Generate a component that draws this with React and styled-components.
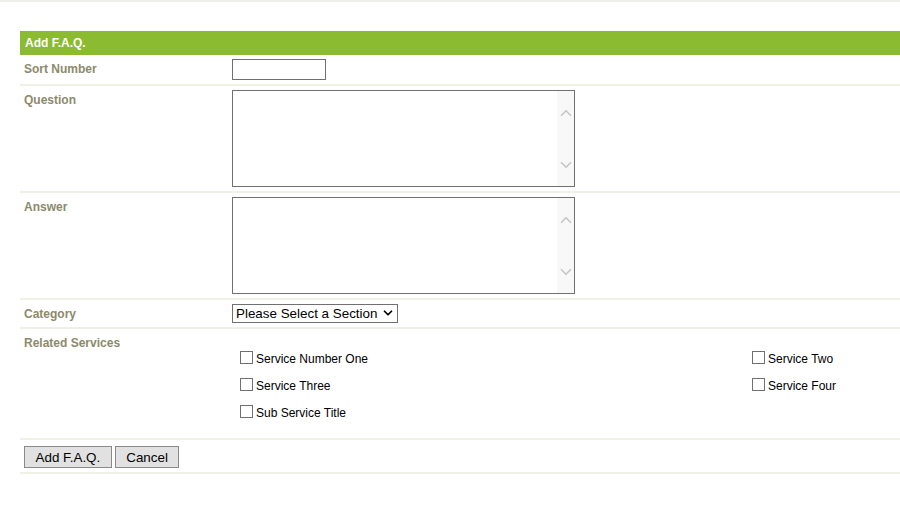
import React from 'react'
import styled, {createGlobalStyle} from 'styled-components'
import {ChevronUp, ChevronDown} from 'lucide-react'

const GlobalStyle = createGlobalStyle`
    body {
        margin: 0;
        background: #fff;
        font-family: "Liberation Sans", Arial, sans-serif;
    }
`

const services = [
    'Service Number One', 'Service Two',
    'Service Three', 'Service Four',
    'Sub Service Title',
]

// textarea with an always-visible scroll track like the old browser look
const ScrollArea = () => (
    <AreaFrame>
        <TextBox />
        <Track>
            <ChevronUp size={18} strokeWidth={2.2} />
            <ChevronDown size={18} strokeWidth={2.2} />
        </Track>
    </AreaFrame>
)

const App = () => {
    return (
        <Page>
            <GlobalStyle />
            <Form>
                <Header>Add F.A.Q.</Header>
                <Row>
                    <Label>Sort Number</Label>
                    <Field><SortInput type="text" /></Field>
                </Row>
                <Row>
                    <Label>Question</Label>
                    <Field><ScrollArea /></Field>
                </Row>
                <Row>
                    <Label>Answer</Label>
                    <Field><ScrollArea /></Field>
                </Row>
                <Row>
                    <Label>Category</Label>
                    <Field>
                        <SelectWrap>
                            <Select defaultValue="">
                                <option value="">Please Select a Section</option>
                            </Select>
                            <Arrow><ChevronDown size={14} strokeWidth={3} /></Arrow>
                        </SelectWrap>
                    </Field>
                </Row>
                <Row>
                    <Label>Related Services</Label>
                    <Services>
                        {services.map(name => (
                            <Check key={name}>
                                <Box type="checkbox" />
                                <span>{name}</span>
                            </Check>
                        ))}
                    </Services>
                </Row>
                <Actions>
                    <Button>Add F.A.Q.</Button>
                    <Button>Cancel</Button>
                </Actions>
            </Form>
        </Page>
    )
}

const Page = styled.div`
    border-top: 2px solid #eeeeea;
    padding: 29px 0 40px 20px;
`

const Form = styled.div`
    display: flex;
    flex-direction: column;
`

const Header = styled.div`
    background: #8bbb30;
    color: #fff;
    font-weight: bold;
    font-size: 12px;
    height: 24px;
    line-height: 24px;
    padding-left: 5px;
`

const Row = styled.div`
    display: grid;
    grid-template-columns: 212px 1fr;
    border-bottom: 2px solid #f0f0e6;
`

const Label = styled.div`
    color: #8c8a6b;
    font-weight: bold;
    font-size: 12px;
    padding: 7px 0 0 4px;
`

const Field = styled.div`
    padding: 4px 0;
    display: flex;
`

const SortInput = styled.input`
    box-sizing: border-box;
    width: 94px;
    height: 21px;
    border: 1px solid #707070;
    margin: 0;
`

const AreaFrame = styled.div`
    box-sizing: border-box;
    width: 343px;
    height: 97px;
    border: 1px solid #707070;
    display: flex;
`

const TextBox = styled.textarea`
    flex: 1;
    border: none;
    margin: 0;
    padding: 2px;
    resize: none;
    outline: none;
`

const Track = styled.div`
    width: 17px;
    background: #f8f8f8;
    color: #c6c6c6;
    display: flex;
    flex-direction: column;
    justify-content: space-between;
    align-items: center;
    padding: 13px 0 12px;
`

const SelectWrap = styled.div`
    position: relative;
    display: flex;
`

const Select = styled.select`
    box-sizing: border-box;
    width: 166px;
    height: 19px;
    margin: 0;
    padding: 0 0 0 3px;
    font-family: "Liberation Sans", Arial, sans-serif;
    font-size: 13.4px;
    color: #000;
    border: 1px solid #707070;
    border-radius: 0;
    background: #fff;
    appearance: none;
`

const Arrow = styled.span`
    position: absolute;
    right: 3px;
    top: 2px;
    display: flex;
    color: #000;
    pointer-events: none;
`

const Services = styled.div`
    display: grid;
    grid-template-columns: 512px auto;
    row-gap: 11px;
    padding: 22px 0 17px 8px;
`

const Check = styled.label`
    display: flex;
    align-items: flex-start;
    font-size: 12px;
    line-height: 16px;
    color: #000;
    height: 16px;
`

const Box = styled.input`
    appearance: none;
    box-sizing: border-box;
    width: 13px;
    height: 13px;
    margin: 0 3px 0 0;
    border: 1px solid #707070;
    background: #fff;
`

const Actions = styled.div`
    display: flex;
    gap: 3px;
    padding: 6px 0 4px 4px;
    border-bottom: 2px solid #f0f0e6;
`

const Button = styled.button`
    height: 22px;
    padding: 0 10.5px;
    font-family: "Liberation Sans", Arial, sans-serif;
    font-size: 13.4px;
    color: #000;
    border: 1px solid #8a8a8a;
    background: #e1e1e1;
    border-radius: 0;
`

export default App
